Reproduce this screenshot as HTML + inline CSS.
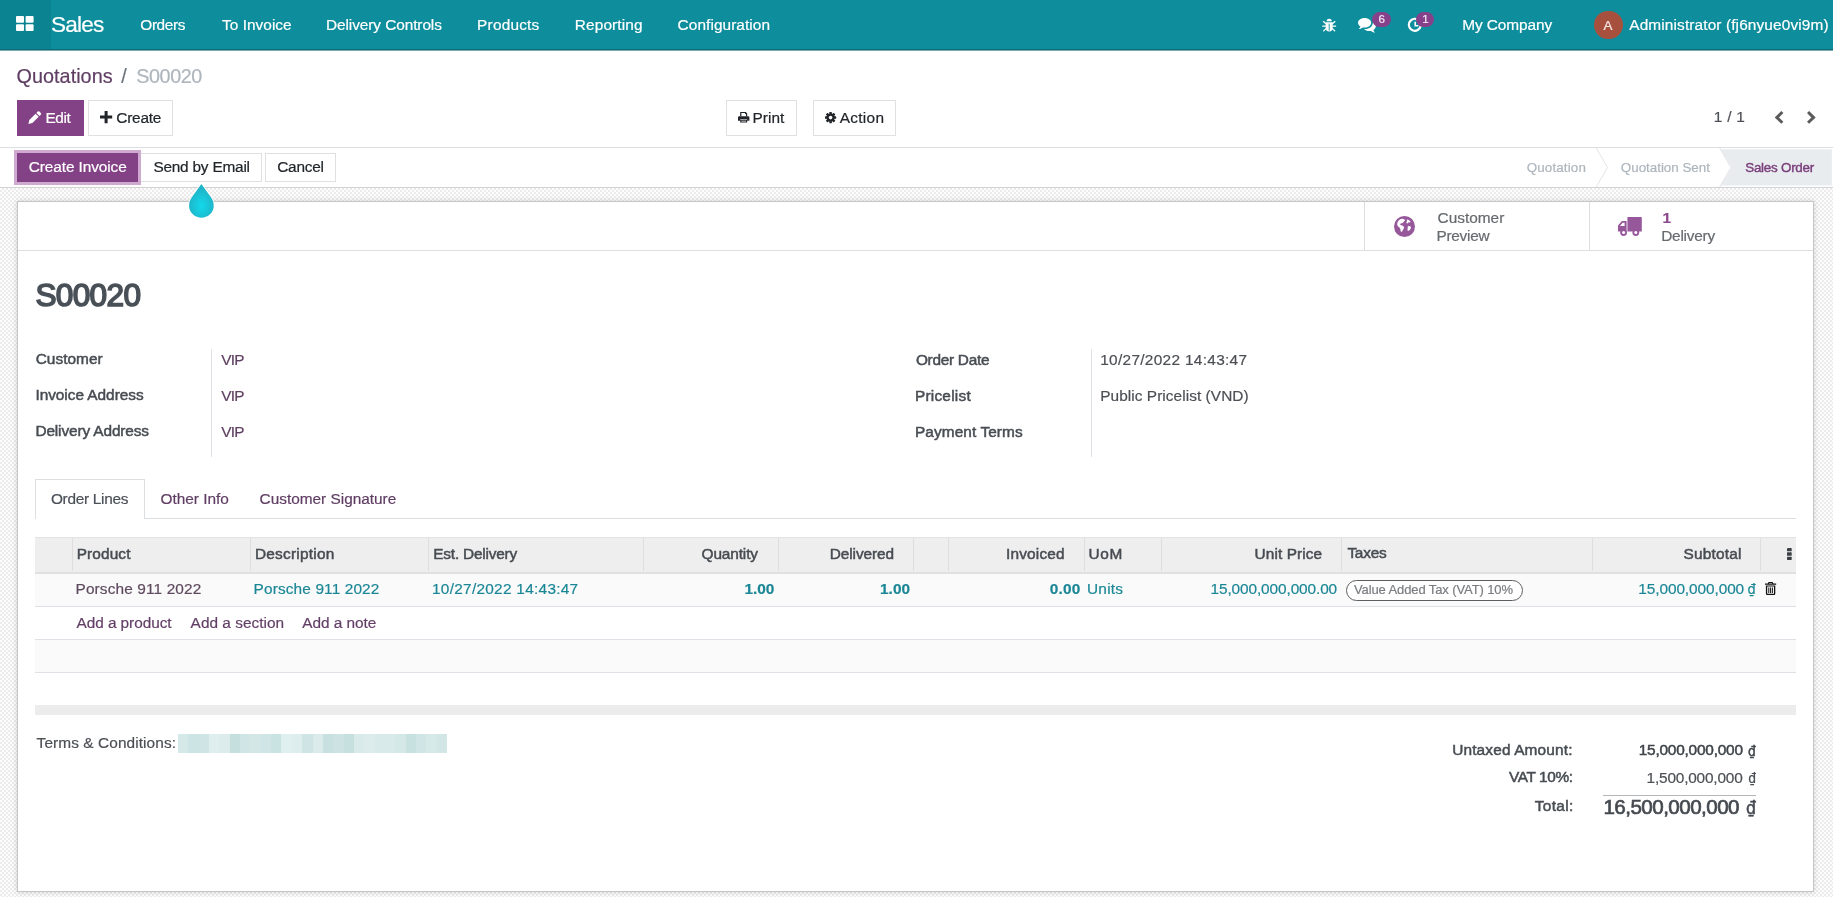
<!DOCTYPE html>
<html lang="en">
<head>
<meta charset="utf-8">
<title>S00020 - Odoo</title>
<style>
*{box-sizing:border-box;margin:0;padding:0}
html,body{width:1833px;height:897px;overflow:hidden;background:#fff}
body{font-family:"Liberation Sans",sans-serif;font-size:15.4px;color:#4c4f54;position:relative;line-height:1}
.a,.t{position:absolute;white-space:nowrap}
.t{line-height:20px;height:20px}
svg{position:absolute;display:block;overflow:visible}
#nav{left:0;top:0;width:1833px;height:51px;background:linear-gradient(180deg,#0e8e9c 0 49px,#0c6a75 49px 50px,#7faeb3 50px 51px)}
#apps{left:0;top:0;width:51px;height:49px;background:#0c8391}
.badge{position:absolute;height:15px;border-radius:8px;background:#87418a}
.btn{position:absolute;border:1px solid #dee0e2;background:#fff}
.pri{background:#834285;border-color:#834285}
#status{left:0;top:147px;width:1833px;height:41px;background:#fff;border-top:1px solid #dcdfe2;border-bottom:1px solid #d2d2d2}
#bg{left:0;top:188px;width:1833px;height:709px;background:repeating-conic-gradient(#ebebeb 0% 25%,#fdfdfd 0% 50%) 0 0/4px 4px}
#sheet{left:17px;top:201px;width:1797px;height:691px;background:#fff;border:1px solid #c6c6c6;box-shadow:0 0 5px rgba(0,0,0,.16)}
.hl{position:absolute;height:1px;background:#dee2e6}
.vl{position:absolute;width:1px;background:#dee2e6}
</style>
</head>
<body>

<!-- NAVBAR -->
<div id="nav" class="a"></div>
<div id="apps" class="a"></div>
<svg style="left:16.3px;top:16.4px" width="17.6" height="15" viewBox="0 0 17.6 15"><g fill="#fff"><rect x="0" y="0" width="8" height="6.7" rx="1"/><rect x="9.6" y="0" width="8" height="6.7" rx="1"/><rect x="0" y="8.3" width="8" height="6.7" rx="1"/><rect x="9.6" y="8.3" width="8" height="6.7" rx="1"/></g></svg>
<!-- bug -->
<svg style="left:1322.400px;top:18.200px" width="14.400" height="14" viewBox="0 0 14.4 14"><g fill="#fff"><path d="M4.600 3.300a2.600 2.600 0 0 1 5.200 0z"/><path d="M3.700 4.300h7v5.200a3.500 4 0 0 1-7 0z"/></g><g stroke="#fff" stroke-width="1.300" fill="none" stroke-linecap="round"><path d="M3.700 5.600L1.500 3.600M10.700 5.600L12.900 3.600M3.700 8.200H.8M10.700 8.200H13.600M4 10.600L1.700 12.900M10.400 10.600L12.700 12.900"/></g><path d="M7.200 5.600V12.600" stroke="#0e8e9c" stroke-width=".9"/></svg>
<!-- comments -->
<svg style="left:1358px;top:18px" width="18.4" height="14.6" viewBox="0 0 18.4 14.6"><g fill="#fff"><path d="M6.6 0C2.95 0 0 2.15 0 4.8c0 1.5.95 2.85 2.45 3.73C2.2 9.4 1.6 10.3.8 11c1.6-.1 3-.75 4-1.55.58.1 1.18.15 1.8.15 3.65 0 6.6-2.15 6.6-4.8S10.250 0 6.600 0z"/><path d="M14.5 6.200c-.5 2.800-3.700 4.900-7.600 4.900-.3 0-.6 0-.9-.03C7.200 12.300 9.100 13.100 11.200 13.100c.62 0 1.220-.05 1.800-.15 1 .8 2.400 1.450 4 1.550-.8-.7-1.400-1.600-1.650-2.470 1.500-.88 2.450-2.230 2.450-3.730 0-1.600-1.100-3-2.800-3.900-.100.600-.200 1.200-.500 1.800z"/></g></svg>
<!-- activity clock -->
<svg style="left:1407.4px;top:17.4px" width="16" height="15" viewBox="0 0 16 15"><path d="M13.6 9.400A6 6 0 1 1 9.800 2.100" fill="none" stroke="#fff" stroke-width="2.200" stroke-linecap="round"/><path d="M8.200 5.200V8.800H10.800" fill="none" stroke="#fff" stroke-width="1.600" stroke-linecap="round"/></svg>
<div class="a" style="left:1594.2px;top:10.6px;width:28.8px;height:28.8px;border-radius:50%;background:#a8503e"></div>
<div class="badge" style="left:1372px;top:11.5px;width:19px"></div>
<div class="badge" style="left:1416px;top:11.5px;width:18.4px"></div>

<!-- CONTROL PANEL -->
<div class="btn pri" style="left:17px;top:100px;width:67px;height:36px"></div>
<div class="btn" style="left:88px;top:100px;width:85px;height:36px"></div>
<div class="btn" style="left:726px;top:100px;width:71px;height:36px"></div>
<div class="btn" style="left:813px;top:100px;width:83px;height:36px"></div>
<!-- pencil -->
<svg style="left:28px;top:111px" width="14" height="13.200" viewBox="0 0 14 13.2"><g fill="#fff"><path d="M9.700 0.600a1.200 1.200 0 0 1 1.700 0l1.400 1.400a1.200 1.200 0 0 1 0 1.700L11.500 5 8.400 1.900z"/><path d="M7.600 2.700l3.100 3.100-6.300 6.300L0.400 13l.900-4z"/></g></svg>
<!-- plus -->
<svg style="left:99.8px;top:111.2px" width="12.200" height="12.200" viewBox="0 0 12.2 12.2"><path d="M4.600 0h3v4.600h4.600v3H7.600v4.600h-3V7.600H0v-3h4.600z" fill="#212529"/></svg>
<!-- print -->
<svg style="left:737.8px;top:112.200px" width="11.400" height="10.600" viewBox="0 0 11.4 10.6"><g fill="#212529"><path d="M2.200 0h5.600l1.400 1.400V4.200H8V2H7V1.100H3.400V4.200H2.200z"/><path d="M1.300 4.200h8.800a1.300 1.300 0 0 1 1.300 1.300v3.300H9.200V7.200H2.200v1.600H0V5.500a1.300 1.300 0 0 1 1.300-1.300z"/><path d="M2.200 7.800h7v2.800h-7zM3.300 8.800v.8h4.800v-.8z" fill-rule="evenodd"/></g></svg>
<!-- cog -->
<svg style="left:824.800px;top:112.200px" width="11.200" height="11.200" viewBox="-5.600 -5.600 11.200 11.200"><g fill="#212529"><circle r="4.100"/><rect x="-1.250" y="-5.600" width="2.500" height="11.200" rx=".4"/><rect x="-1.250" y="-5.600" width="2.500" height="11.200" rx=".4" transform="rotate(45)"/><rect x="-1.250" y="-5.600" width="2.500" height="11.200" rx=".4" transform="rotate(90)"/><rect x="-1.250" y="-5.600" width="2.500" height="11.200" rx=".4" transform="rotate(135)"/></g><circle r="1.800" fill="#fff"/></svg>
<!-- pager chevrons -->
<svg style="left:1774.300px;top:111.300px" width="9.400" height="12.800" viewBox="0 0 9.4 12.8"><path d="M7.300 0L9.400 2.100 5 6.400 9.400 10.700 7.300 12.800.7 6.400z" fill="#5b5b5b"/></svg>
<svg style="left:1807px;top:111.300px" width="9.400" height="12.800" viewBox="0 0 9.4 12.8"><path d="M2.100 0L0 2.100 4.400 6.400 0 10.700 2.100 12.800 8.700 6.400z" fill="#5b5b5b"/></svg>

<!-- STATUS BAR -->
<div id="status" class="a"></div>
<div class="a" style="left:14px;top:150px;width:127px;height:35px;background:#cfa9d0"></div>
<div class="btn pri" style="left:17px;top:153px;width:121px;height:29px"></div>
<div class="btn" style="left:141px;top:153px;width:121px;height:29px;border-left:none"></div>
<div class="btn" style="left:265px;top:153px;width:71px;height:29px"></div>
<!-- status arrows -->
<svg style="left:1590px;top:148px" width="243" height="39" viewBox="0 0 243 39">
<path d="M130.700 1.200H241.900V37.600H130.700L141.600 19.400z" fill="#e9ecef"/>
<path d="M6.300 0L17.500 19.500 6.300 39" fill="none" stroke="#e3e5e8" stroke-width="1"/>
<path d="M129.700 0L140.900 19.500 129.700 39" fill="none" stroke="#e3e5e8" stroke-width="1"/>
</svg>

<!-- SHEET -->
<div id="bg" class="a"></div>
<div id="sheet" class="a"></div>
<!-- teardrop pointer -->
<svg style="left:189px;top:183.900px" width="24.800" height="33.700" viewBox="0 0 24.8 33.7"><defs><radialGradient id="tg" cx="50%" cy="64%" r="50%"><stop offset="0" stop-color="#13d9eb"/><stop offset="1" stop-color="#1fb5c9"/></radialGradient></defs><path d="M12.400 0L22.480 14.080A12.400 12.400 0 1 1 2.320 14.080z" fill="url(#tg)" stroke="#fff" stroke-opacity=".85" stroke-width="1.600" paint-order="stroke"/></svg>
<!-- button box -->
<div class="hl" style="left:18px;top:250px;width:1795px;background:#dcdfe2"></div>
<div class="vl" style="left:1364px;top:202px;height:48px;background:#dcdfe2"></div>
<div class="vl" style="left:1589px;top:202px;height:48px;background:#dcdfe2"></div>
<!-- globe -->
<svg style="left:1394px;top:215.600px" width="21" height="21" viewBox="0 0 21 21"><circle cx="10.500" cy="10.500" r="10.500" fill="#96589a"/><g fill="#fff"><path d="M6.200 3.200c1.400-.9 3.200-.6 4.300.2.900.7.400 1.500-.4 1.900-.9.500-.6 1.300-1.500 1.700-.8.400-1.700 0-2.300.8-.5.700.3 1.300 1 1.500 1.100.3 2.100.7 2.600 1.700.5 1-.2 1.800-.8 2.500-.6.700-.5 1.700-1.200 2.300-.7.500-1.200-.3-1.300-1-.2-1.100-.1-2.200-.9-3.100-.7-.8-1.800-1.200-2.200-2.200C3 8.200 3.200 6.800 3.900 5.600c.5-.9 1.300-1.800 2.300-2.400z"/><path d="M13.300 3.600c1.200.1 2.300 1 3 2 .5.700-.2 1-.8.800-.8-.2-1.500.1-1.800.8-.3.600-1.100.5-1.300-.1-.3-.8.600-1.200.6-2 0-.5-.3-1.500.3-1.500z"/><path d="M14.200 10.200c.8-.5 2-.3 2.500.5.500.9 0 2.100-.6 2.900-.5.700-1.500 1.600-2.300 1.100-.7-.5-.1-1.400-.1-2.100 0-.9-.3-1.900.5-2.400z"/></g></svg>
<!-- truck -->
<svg style="left:1618px;top:217.400px" width="23.800" height="19" viewBox="0 0 23.800 19"><g fill="#96589a"><path d="M9.400 0h13.600a.8.800 0 0 1 .8.800V14.600H9.400z"/><path d="M0 8.600L3.400 4.600a1.600 1.600 0 0 1 1.200-.6H8.600V14.600H0zM2 9h4.600V5.800H4.600z" fill-rule="evenodd"/><circle cx="5.600" cy="15.600" r="3.400"/><circle cx="17.800" cy="15.600" r="3.400"/></g><circle cx="5.600" cy="15.600" r="1.500" fill="#fff"/><circle cx="17.800" cy="15.600" r="1.500" fill="#fff"/></svg>
<!-- field separators -->
<div class="vl" style="left:211px;top:349px;height:108px"></div>
<div class="vl" style="left:1091px;top:349px;height:108px"></div>
<!-- tabs -->
<div class="hl" style="left:35px;top:518px;width:1761px;background:#dcdfe2"></div>
<div class="a" style="left:35px;top:479px;width:110px;height:40px;background:#fff;border:1px solid #dcdfe2;border-bottom:none"></div>
<!-- table -->
<div class="a" style="left:35px;top:537px;width:1761px;height:35px;background:#eeeeee;border-top:1px solid #e3e3e3"></div>
<div class="a" style="left:35px;top:571.500px;width:1761px;height:2.500px;background:#dfe0e2"></div>
<div class="a" style="left:35px;top:574px;width:1761px;height:32px;background:#fafafa"></div>
<div class="hl" style="left:35px;top:606px;width:1761px"></div>
<div class="hl" style="left:35px;top:639px;width:1761px"></div>
<div class="a" style="left:35px;top:640px;width:1761px;height:32px;background:#fafafa"></div>
<div class="hl" style="left:35px;top:672px;width:1761px"></div>
<div class="a" style="left:35px;top:705px;width:1761px;height:10px;background:#ececec"></div>
<div class="vl" style="left:72px;top:538px;height:33px;background:#dedede"></div><div class="vl" style="left:250px;top:538px;height:33px;background:#dedede"></div><div class="vl" style="left:428px;top:538px;height:33px;background:#dedede"></div><div class="vl" style="left:643px;top:538px;height:33px;background:#dedede"></div><div class="vl" style="left:778px;top:538px;height:33px;background:#dedede"></div><div class="vl" style="left:913px;top:538px;height:33px;background:#dedede"></div><div class="vl" style="left:948px;top:538px;height:33px;background:#dedede"></div><div class="vl" style="left:1084px;top:538px;height:33px;background:#dedede"></div><div class="vl" style="left:1161px;top:538px;height:33px;background:#dedede"></div><div class="vl" style="left:1341px;top:538px;height:33px;background:#dedede"></div><div class="vl" style="left:1592px;top:538px;height:33px;background:#dedede"></div><div class="vl" style="left:1760px;top:538px;height:33px;background:#dedede"></div>
<!-- tax pill -->
<div class="a" style="left:1346px;top:580.300px;width:177px;height:20.600px;border:1px solid #5c5f62;border-radius:11px;background:#fff"></div>
<!-- kebab -->
<svg style="left:1787.100px;top:548px" width="4.700" height="12" viewBox="0 0 4.700 12"><g fill="#3c4045"><rect x="0" y="0" width="4.700" height="3.300" rx=".5"/><rect x="0" y="4.350" width="4.700" height="3.300" rx=".5"/><rect x="0" y="8.700" width="4.700" height="3.300" rx=".5"/></g></svg>
<!-- trash -->
<svg style="left:1765.200px;top:582px" width="11.200" height="13" viewBox="0 0 11.2 13"><g fill="#111"><path d="M3.600 0h4l.8 1.400H11.200v1.300H0V1.400h2.800zM4.200 .9l-.3.500h3.400L7 .9z" fill-rule="evenodd"/><path d="M.9 3.400h9.400V11.700a1.300 1.300 0 0 1-1.300 1.300H2.200A1.300 1.300 0 0 1 .9 11.700zM2.200 4.500v7.300h6.800V4.500zM3.300 5.400h1v5.500h-1zM5.100 5.400h1v5.500h-1zM6.900 5.400h1v5.500h-1z" fill-rule="evenodd"/></g></svg>
<!-- totals line -->
<div class="hl" style="left:1603px;top:795px;width:153px;background:#b4b7ba"></div>
<div class="a" style="left:178px;top:734px;width:269px;height:19px;background:linear-gradient(90deg,#d6e9e9 0.0px 10.3px,#cde4e4 10.3px 20.7px,#cfe5e5 20.7px 31.0px,#dfeeee 31.0px 41.4px,#dcecec 41.4px 51.7px,#c5dfdf 51.7px 62.1px,#d0e5e5 62.1px 72.4px,#d3e7e7 72.4px 82.8px,#d0e6e6 82.8px 93.1px,#c9e2e2 93.1px 103.5px,#e0efef 103.5px 113.8px,#deeded 113.8px 124.2px,#cfe4e4 124.2px 134.5px,#dbebeb 134.5px 144.8px,#c8e0e0 144.8px 155.2px,#cde3e3 155.2px 165.5px,#c6dfdf 165.5px 175.9px,#d9eaea 175.9px 186.2px,#dcecec 186.2px 196.6px,#d8eaea 196.6px 206.9px,#d9eaea 206.9px 217.3px,#d5e8e8 217.3px 227.6px,#c7e0e0 227.6px 238.0px,#d0e5e5 238.0px 248.3px,#d6e9e9 248.3px 258.7px,#d2e6e6 258.7px 269.0px)"></div>

<!-- TEXT -->
<div id="txt" style="position:absolute;left:0;top:0;width:1833px;height:897px;will-change:transform;-webkit-text-stroke:0.2px">
<div class="t" style="left:51.00px;top:14.57px;font-size:22.6px;letter-spacing:-0.780px;color:#ffffff;">Sales</div>
<div class="t" style="left:140.30px;top:14.86px;font-size:15.4px;letter-spacing:-0.388px;color:#ffffff;">Orders</div>
<div class="t" style="left:222.10px;top:14.86px;font-size:15.4px;letter-spacing:0.029px;color:#ffffff;">To Invoice</div>
<div class="t" style="left:326.00px;top:14.86px;font-size:15.4px;letter-spacing:-0.080px;color:#ffffff;">Delivery Controls</div>
<div class="t" style="left:477.10px;top:14.86px;font-size:15.4px;letter-spacing:0.208px;color:#ffffff;">Products</div>
<div class="t" style="left:574.80px;top:14.86px;font-size:15.4px;letter-spacing:0.128px;color:#ffffff;">Reporting</div>
<div class="t" style="left:677.60px;top:14.86px;font-size:15.4px;letter-spacing:0.076px;color:#ffffff;">Configuration</div>
<div class="t" style="left:1462.20px;top:14.86px;font-size:15.4px;letter-spacing:-0.074px;color:#ffffff;">My Company</div>
<div class="t" style="left:1603.50px;top:15.95px;font-size:13.4px;letter-spacing:-0.300px;color:#f6e9e6;">A</div>
<div class="t" style="left:1629.30px;top:14.56px;font-size:15.4px;letter-spacing:0.124px;color:#ffffff;">Administrator (fj6nyue0vi9m)</div>
<div class="t" style="left:1378.60px;top:9.38px;font-size:11.6px;letter-spacing:-0.300px;color:#f3e6f3;">6</div>
<div class="t" style="left:1422.20px;top:9.38px;font-size:11.6px;letter-spacing:-0.300px;color:#f3e6f3;">1</div>
<div class="t" style="left:16.60px;top:65.94px;font-size:19.8px;letter-spacing:0.036px;color:#603e64;">Quotations</div>
<div class="t" style="left:121.20px;top:65.94px;font-size:19.8px;letter-spacing:-0.300px;color:#6c757d;">/</div>
<div class="t" style="left:136.30px;top:65.94px;font-size:19.8px;letter-spacing:-0.440px;color:#adb5bd;">S00020</div>
<div class="t" style="left:45.40px;top:107.76px;font-size:15.4px;letter-spacing:-0.381px;color:#ffffff;">Edit</div>
<div class="t" style="left:116.30px;top:107.76px;font-size:15.4px;letter-spacing:-0.227px;color:#212529;">Create</div>
<div class="t" style="left:752.60px;top:107.56px;font-size:15.4px;letter-spacing:0.008px;color:#212529;">Print</div>
<div class="t" style="left:839.80px;top:107.56px;font-size:15.4px;letter-spacing:0.277px;color:#212529;">Action</div>
<div class="t" style="left:1713.70px;top:106.86px;font-size:15.4px;letter-spacing:0.303px;color:#4c4f54;">1 / 1</div>
<div class="t" style="left:28.80px;top:156.86px;font-size:15.4px;letter-spacing:-0.098px;color:#ffffff;">Create Invoice</div>
<div class="t" style="left:153.40px;top:156.86px;font-size:15.4px;letter-spacing:-0.218px;color:#212529;">Send by Email</div>
<div class="t" style="left:277.20px;top:156.86px;font-size:15.4px;letter-spacing:-0.238px;color:#212529;">Cancel</div>
<div class="t" style="left:1526.70px;top:157.55px;font-size:13.4px;letter-spacing:0.135px;color:#adb5bd;">Quotation</div>
<div class="t" style="left:1620.80px;top:157.55px;font-size:13.4px;letter-spacing:-0.016px;color:#adb5bd;">Quotation Sent</div>
<div class="t" style="left:1745.20px;top:157.55px;font-size:13.4px;letter-spacing:-0.239px;color:#7a3f7b;-webkit-text-stroke:0.43px;">Sales Order</div>
<div class="t" style="left:1437.50px;top:207.86px;font-size:15.4px;letter-spacing:0.016px;color:#666a6e;">Customer</div>
<div class="t" style="left:1436.50px;top:225.76px;font-size:15.4px;letter-spacing:-0.287px;color:#666a6e;">Preview</div>
<div class="t" style="left:1662.60px;top:207.86px;font-size:15.4px;letter-spacing:-0.300px;color:#8a4a8c;font-weight:700;">1</div>
<div class="t" style="left:1661.20px;top:225.76px;font-size:15.4px;letter-spacing:-0.228px;color:#666a6e;">Delivery</div>
<div class="t" style="left:35.40px;top:285.14px;font-size:31.6px;letter-spacing:-0.671px;color:#495057;-webkit-text-stroke:1.58px;">S00020</div>
<div class="t" style="left:35.70px;top:349.36px;font-size:15.4px;letter-spacing:0.045px;color:#474c52;-webkit-text-stroke:0.49px;">Customer</div>
<div class="t" style="left:35.40px;top:385.46px;font-size:15.4px;letter-spacing:-0.029px;color:#474c52;-webkit-text-stroke:0.49px;">Invoice Address</div>
<div class="t" style="left:35.40px;top:421.36px;font-size:15.4px;letter-spacing:-0.122px;color:#474c52;-webkit-text-stroke:0.49px;">Delivery Address</div>
<div class="t" style="left:221.30px;top:350.46px;font-size:15.4px;letter-spacing:-0.821px;color:#5f4162;">VIP</div>
<div class="t" style="left:221.30px;top:386.26px;font-size:15.4px;letter-spacing:-0.821px;color:#5f4162;">VIP</div>
<div class="t" style="left:221.30px;top:422.06px;font-size:15.4px;letter-spacing:-0.821px;color:#5f4162;">VIP</div>
<div class="t" style="left:915.90px;top:349.56px;font-size:15.4px;letter-spacing:-0.274px;color:#474c52;-webkit-text-stroke:0.49px;">Order Date</div>
<div class="t" style="left:914.90px;top:385.56px;font-size:15.4px;letter-spacing:0.238px;color:#474c52;-webkit-text-stroke:0.49px;">Pricelist</div>
<div class="t" style="left:914.90px;top:421.56px;font-size:15.4px;letter-spacing:0.099px;color:#474c52;-webkit-text-stroke:0.49px;">Payment Terms</div>
<div class="t" style="left:1100.20px;top:349.56px;font-size:15.4px;letter-spacing:0.314px;color:#4c4f54;">10/27/2022 14:43:47</div>
<div class="t" style="left:1100.20px;top:385.56px;font-size:15.4px;letter-spacing:0.064px;color:#4c4f54;">Public Pricelist (VND)</div>
<div class="t" style="left:50.90px;top:488.56px;font-size:15.4px;letter-spacing:-0.291px;color:#495057;">Order Lines</div>
<div class="t" style="left:160.50px;top:488.56px;font-size:15.4px;letter-spacing:-0.009px;color:#603e64;">Other Info</div>
<div class="t" style="left:259.60px;top:488.56px;font-size:15.4px;letter-spacing:-0.012px;color:#603e64;">Customer Signature</div>
<div class="t" style="left:76.70px;top:543.76px;font-size:15.4px;letter-spacing:0.123px;color:#474c52;-webkit-text-stroke:0.49px;">Product</div>
<div class="t" style="left:254.90px;top:543.76px;font-size:15.4px;letter-spacing:0.238px;color:#474c52;-webkit-text-stroke:0.49px;">Description</div>
<div class="t" style="left:433.30px;top:543.76px;font-size:15.4px;letter-spacing:-0.215px;color:#474c52;-webkit-text-stroke:0.49px;">Est. Delivery</div>
<div class="t" style="left:701.60px;top:543.76px;font-size:15.4px;letter-spacing:-0.132px;color:#474c52;-webkit-text-stroke:0.49px;">Quantity</div>
<div class="t" style="left:829.80px;top:543.76px;font-size:15.4px;letter-spacing:-0.107px;color:#474c52;-webkit-text-stroke:0.49px;">Delivered</div>
<div class="t" style="left:1006.00px;top:543.76px;font-size:15.4px;letter-spacing:0.176px;color:#474c52;-webkit-text-stroke:0.49px;">Invoiced</div>
<div class="t" style="left:1088.40px;top:543.76px;font-size:15.4px;letter-spacing:0.663px;color:#474c52;-webkit-text-stroke:0.49px;">UoM</div>
<div class="t" style="left:1254.60px;top:543.76px;font-size:15.4px;letter-spacing:0.094px;color:#474c52;-webkit-text-stroke:0.49px;">Unit Price</div>
<div class="t" style="left:1347.40px;top:542.76px;font-size:15.4px;letter-spacing:-0.227px;color:#474c52;-webkit-text-stroke:0.49px;">Taxes</div>
<div class="t" style="left:1683.60px;top:543.76px;font-size:15.4px;letter-spacing:0.178px;color:#474c52;-webkit-text-stroke:0.49px;">Subtotal</div>
<div class="t" style="left:75.50px;top:578.86px;font-size:15.4px;letter-spacing:0.132px;color:#5e4a5e;">Porsche 911 2022</div>
<div class="t" style="left:253.60px;top:578.86px;font-size:15.4px;letter-spacing:0.132px;color:#1b8796;">Porsche 911 2022</div>
<div class="t" style="left:432.00px;top:578.86px;font-size:15.4px;letter-spacing:0.275px;color:#1b8796;">10/27/2022 14:43:47</div>
<div class="t" style="left:744.50px;top:578.86px;font-size:15.4px;letter-spacing:-0.032px;color:#1b8796;font-weight:700;">1.00</div>
<div class="t" style="left:880.00px;top:578.86px;font-size:15.4px;letter-spacing:0.035px;color:#1b8796;font-weight:700;">1.00</div>
<div class="t" style="left:1049.80px;top:578.86px;font-size:15.4px;letter-spacing:0.168px;color:#1b8796;font-weight:700;">0.00</div>
<div class="t" style="left:1087.00px;top:578.86px;font-size:15.4px;letter-spacing:0.233px;color:#1b8796;">Units</div>
<div class="t" style="left:1210.50px;top:578.86px;font-size:15.4px;letter-spacing:-0.107px;color:#1b8796;">15,000,000,000.00</div>
<div class="t" style="left:1354.00px;top:579.79px;font-size:13px;letter-spacing:-0.109px;color:#7a7d80;">Value Added Tax (VAT) 10%</div>
<div class="t" style="left:1638.30px;top:578.86px;font-size:15.4px;letter-spacing:-0.086px;color:#1b8796;">15,000,000,000</div>
<div class="t" style="left:1747.60px;top:579.21px;font-size:14.4px;letter-spacing:-0.300px;color:#1b8796;font-family:'DejaVu Sans Condensed',sans-serif;">₫</div>
<div class="t" style="left:76.50px;top:612.76px;font-size:15.4px;letter-spacing:-0.063px;color:#633f67;">Add a product</div>
<div class="t" style="left:190.60px;top:612.76px;font-size:15.4px;letter-spacing:0.017px;color:#633f67;">Add a section</div>
<div class="t" style="left:302.30px;top:612.76px;font-size:15.4px;letter-spacing:-0.043px;color:#633f67;">Add a note</div>
<div class="t" style="left:36.60px;top:732.86px;font-size:15.4px;letter-spacing:0.093px;color:#4c4f54;">Terms &amp; Conditions:</div>
<div class="t" style="left:1452.20px;top:739.66px;font-size:15.4px;letter-spacing:0.154px;color:#474c52;-webkit-text-stroke:0.49px;">Untaxed Amount:</div>
<div class="t" style="left:1638.70px;top:740.46px;font-size:15.4px;letter-spacing:-0.209px;color:#3f444a;-webkit-text-stroke:0.49px;">15,000,000,000</div>
<div class="t" style="left:1748.00px;top:741.09px;font-size:13.6px;letter-spacing:-0.300px;color:#3f444a;-webkit-text-stroke:0.44px;font-family:'DejaVu Sans Condensed',sans-serif;">₫</div>
<div class="t" style="left:1508.90px;top:766.56px;font-size:15.4px;letter-spacing:-0.375px;color:#474c52;-webkit-text-stroke:0.49px;">VAT 10%:</div>
<div class="t" style="left:1646.60px;top:767.86px;font-size:15.4px;letter-spacing:-0.189px;color:#4c4f54;">1,500,000,000</div>
<div class="t" style="left:1748.20px;top:768.42px;font-size:13.8px;letter-spacing:-0.300px;color:#4c4f54;font-family:'DejaVu Sans Condensed',sans-serif;">₫</div>
<div class="t" style="left:1534.80px;top:795.56px;font-size:15.4px;letter-spacing:0.338px;color:#474c52;-webkit-text-stroke:0.49px;">Total:</div>
<div class="t" style="left:1603.40px;top:797.16px;font-size:20.6px;letter-spacing:-0.538px;color:#454a50;-webkit-text-stroke:0.66px;">16,500,000,000</div>
<div class="t" style="left:1745.90px;top:798.21px;font-size:17.6px;letter-spacing:-0.300px;color:#454a50;-webkit-text-stroke:0.56px;font-family:'DejaVu Sans Condensed',sans-serif;">₫</div>
</div>

</body>
</html>
